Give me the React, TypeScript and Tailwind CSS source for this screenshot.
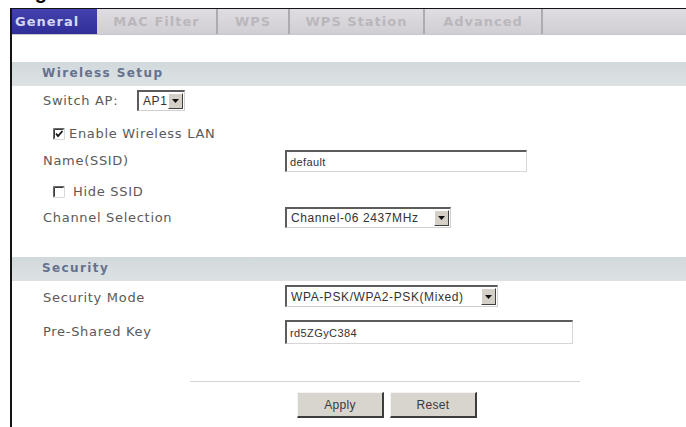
import React from "react";

// Classic sunken checkbox (dark top/left edge, light bottom/right)
const CheckBox = ({ checked }: { checked: boolean }) => (
  <svg width="12" height="12" viewBox="0 0 12 12" className="shrink-0">
    <rect x="0" y="0" width="12" height="12" fill="#fff" />
    <path d="M0.5 11.5V0.5H11.5" stroke="#6a6a6a" fill="none" />
    <path d="M1.5 10.5V1.5H10.5" stroke="#3a3a3a" fill="none" />
    <path d="M0.5 11.5H11.5V0.5" stroke="#d8d8d8" fill="none" />
    {checked && (
      <path d="M3 5.5L5 8L9.5 3" stroke="#111" strokeWidth="1.8" fill="none" />
    )}
  </svg>
);

// Dropdown in the old Windows style
const Select = ({ value, className }: { value: string; className: string }) => (
  <div
    className={`flex items-stretch bg-white border-t-2 border-l-2 border-[#5c5c5c] border-r border-b border-r-[#cfcfcf] border-b-[#cfcfcf] ${className}`}
  >
    <span className="flex-1 flex items-center pl-[4px] text-[12px] tracking-[0.6px] text-[#333] font-['Liberation_Sans',sans-serif] whitespace-nowrap overflow-hidden">
      {value}
    </span>
    <span className="w-[15px] my-[1px] mr-[1px] flex items-center justify-center bg-[#d4d0c8] border border-t-white border-l-white border-r-[#404040] border-b-[#404040]">
      <svg width="7" height="4" viewBox="0 0 7 4">
        <path d="M0 0H7L3.5 4Z" fill="#111" />
      </svg>
    </span>
  </div>
);

const TextInput = ({ value, className }: { value: string; className: string }) => (
  <input
    readOnly
    defaultValue={value}
    className={`bg-white border-t-2 border-l-2 border-[#5c5c5c] border-r border-b border-r-[#d6d6d6] border-b-[#d6d6d6] px-[3px] text-[11px] tracking-[0.4px] text-[#333] font-['Liberation_Sans',sans-serif] outline-none ${className}`}
  />
);

const SectionBar = ({ title }: { title: string }) => (
  <div className="h-[24px] flex items-center pl-[30px] pb-[2px] bg-gradient-to-b from-[#d2d9dc] to-[#dce2e4]">
    <span className="text-[12px] font-bold tracking-[1.4px] text-[#65718d]">{title}</span>
  </div>
);

const Label = ({ children, className = "w-[242px]" }: { children: React.ReactNode; className?: string }) => (
  <span className={`shrink-0 text-[13px] tracking-[0.7px] text-[#5a5a5a] ${className}`}>{children}</span>
);

const tabs = [
  { name: "MAC Filter", w: "w-[121px]" },
  { name: "WPS", w: "w-[72px]" },
  { name: "WPS Station", w: "w-[135px]" },
  { name: "Advanced", w: "w-[118px]" },
];

export default function App() {
  return (
    <div className="w-[686px] h-[427px] overflow-hidden bg-white font-['DejaVu_Sans',Verdana,sans-serif]">
      {/* caption above the panel, mostly cut off */}
      <div className="h-[8px] overflow-hidden pl-[17px]">
        <div className="mt-[-18px] text-[20px] leading-[20px] font-bold text-black font-['Liberation_Sans',sans-serif]">
          Figure
        </div>
      </div>

      <div className="ml-[10px] h-[419px] border-t border-l-2 border-[#141414] flex flex-col">
        {/* tab strip */}
        <div className="h-[26px] flex bg-gradient-to-b from-[#e0dde2] to-[#d1ced3] border-b border-[#c9c6cb]">
          <div className="w-[85px] flex items-center pl-[3px] bg-gradient-to-b from-[#4442ae] to-[#302e98] text-[13px] font-bold tracking-[1px] text-[#d6d6f2]">
            General
          </div>
          {tabs.map((t) => (
            <div
              key={t.name}
              className={`${t.w} flex items-center justify-center border-r-2 border-r-[#aeabb0] text-[13px] font-bold tracking-[1px] text-[#bab7bc]`}
            >
              {t.name}
            </div>
          ))}
        </div>

        <div className="h-[27px]" />

        <SectionBar title="Wireless Setup" />

        <div className="mt-[4px] h-[21px] flex items-center pl-[31px]">
          <Label className="w-[94px]">Switch AP:</Label>
          <Select value="AP1" className="w-[48px] h-[21px]" />
        </div>

        <div className="mt-[13px] h-[20px] flex items-center pl-[41px]">
          <CheckBox checked />
          <span className="ml-[4px] text-[13px] tracking-[0.7px] text-[#5a5a5a]">Enable Wireless LAN</span>
        </div>

        <div className="mt-[6px] h-[22px] flex items-center pl-[31px]">
          <Label>Name(SSID)</Label>
          <TextInput value="default" className="w-[242px] h-[22px]" />
        </div>

        <div className="mt-[10px] h-[20px] flex items-center pl-[41px]">
          <CheckBox checked={false} />
          <span className="ml-[8px] text-[13px] tracking-[0.7px] text-[#5a5a5a]">Hide SSID</span>
        </div>

        <div className="mt-[5px] h-[21px] flex items-center pl-[31px]">
          <Label>Channel Selection</Label>
          <Select value="Channel-06 2437MHz" className="w-[166px] h-[21px]" />
        </div>

        <div className="h-[29px]" />

        <SectionBar title="Security" />

        <div className="mt-[4px] h-[22px] flex items-center pl-[31px]">
          <Label className="w-[242px] pt-[4px]">Security Mode</Label>
          <Select value="WPA-PSK/WPA2-PSK(Mixed)" className="w-[213px] h-[22px]" />
        </div>

        <div className="mt-[13px] h-[24px] flex items-center pl-[31px]">
          <Label>Pre-Shared Key</Label>
          <TextInput value="rd5ZGyC384" className="w-[288px] h-[24px]" />
        </div>

        <div className="mt-[37px] ml-[178px] w-[390px] h-px bg-[#d4d4d4]" />

        <div className="mt-[10px] flex gap-[6px] ml-[285px]">
          {["Apply", "Reset"].map((b) => (
            <button
              key={b}
              className="w-[87px] h-[26px] bg-[#d8d5cf] border-t border-l border-t-[#f4f4f4] border-l-[#f4f4f4] border-r-2 border-b-2 border-r-[#3c3c3c] border-b-[#3c3c3c] text-[12px] tracking-[0.3px] text-[#3a3a3a] font-['Liberation_Sans',sans-serif]"
            >
              {b}
            </button>
          ))}
        </div>
      </div>
    </div>
  );
}
